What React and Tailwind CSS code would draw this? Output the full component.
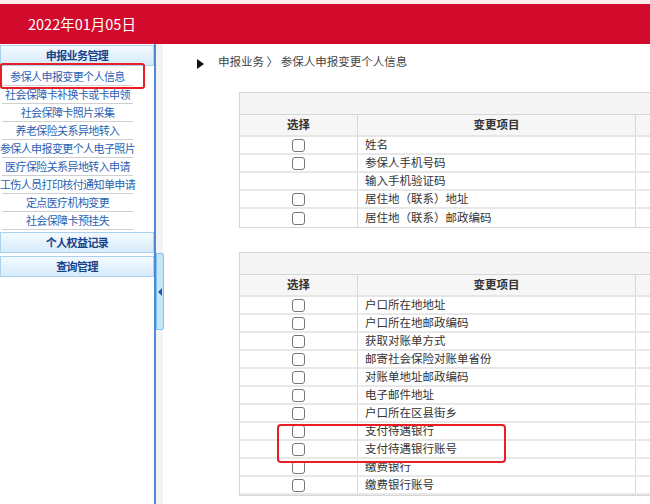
import React from 'react';

const MENU = [
  '参保人申报变更个人信息',
  '社会保障卡补换卡或卡申领',
  '社会保障卡照片采集',
  '养老保险关系异地转入',
  '参保人申报变更个人电子照片',
  '医疗保险关系异地转入申请',
  '工伤人员打印核付通知单申请',
  '定点医疗机构变更',
  '社会保障卡预挂失',
];

const TABLE_1 = [
  { label: '姓名', box: true },
  { label: '参保人手机号码', box: true },
  { label: '输入手机验证码', box: false },
  { label: '居住地（联系）地址', box: true },
  { label: '居住地（联系）邮政编码', box: true },
];

const TABLE_2 = [
  '户口所在地地址',
  '户口所在地邮政编码',
  '获取对账单方式',
  '邮寄社会保险对账单省份',
  '对账单地址邮政编码',
  '电子邮件地址',
  '户口所在区县街乡',
  '支付待遇银行',
  '支付待遇银行账号',
  '缴费银行',
  '缴费银行账号',
].map(label => ({ label, box: true }));

function GroupHeader({ children }) {
  return (
    <div className="h-[21px] flex items-center justify-center border border-[#a9d2f1] bg-gradient-to-b from-[#f4faff] to-[#d6ebfa] text-[11px] tracking-[-0.6px] font-bold text-[#15428b]">
      {children}
    </div>
  );
}

function Checkbox() {
  return <span className="block w-[13px] h-[13px] rounded-[3px] border border-[#767676] bg-white" />;
}

function ChangeTable({ rows, children }) {
  return (
    <div className="relative w-[470px] border border-[#d6d6d6] border-r-0 text-[11.5px] text-[#333]">
      <div className="h-[22px] bg-[#f5f5f5] border-b border-[#d6d6d6]" />
      <div className="flex h-[22px] bg-[#f6f6f6] border-b-2 border-[#e6e6e6] font-bold">
        <div className="w-[118px] flex items-center justify-center border-r border-[#d9d9d9]">选择</div>
        <div className="w-[278px] flex items-center justify-center border-r border-[#d9d9d9]">变更项目</div>
        <div className="flex-1" />
      </div>
      {rows.map(r => (
        <div key={r.label} className="flex h-[18px] border-b-2 border-[#e8e8e8] last:border-b-0">
          <div className="w-[118px] flex items-center justify-center border-r border-[#d9d9d9]">
            {r.box && <Checkbox />}
          </div>
          <div className="w-[278px] flex items-center pl-[7px] border-r border-[#d9d9d9] leading-none">{r.label}</div>
          <div className="flex-1" />
        </div>
      ))}
      {children}
    </div>
  );
}

export default function App() {
  return (
    <div className="w-[650px] h-[504px] overflow-hidden bg-white font-['Noto_Sans_CJK_SC',sans-serif] flex flex-col">
      <div className="h-[4px] bg-[#fbeef0]" />
      <div className="h-[40px] bg-[#d20a2c] flex items-center pl-[28px] text-[14.5px] text-white">
        2022年01月05日
      </div>

      <div className="flex flex-1 min-h-0">
        {/* left menu */}
        <div className="relative w-[156px] border-r-2 border-[#4d8ad6] pt-[1px]">
          <GroupHeader>申报业务管理</GroupHeader>
          <div className="w-[135px] pt-[2px]">
            {MENU.map(m => (
              <div key={m} className="mx-[2px] h-[18px] flex items-center justify-center border-b border-[#cfcfcf] text-[11px] tracking-[-0.6px] text-[#2b5fb3] whitespace-nowrap leading-none">
                {m}
              </div>
            ))}
          </div>
          <div className="mt-[2px] flex flex-col gap-[3px]">
            <GroupHeader>个人权益记录</GroupHeader>
            <GroupHeader>查询管理</GroupHeader>
          </div>
          <div className="absolute left-0 top-[19px] w-[145px] h-[26px] border-2 border-[#ea1c24] rounded-[3px]" />
        </div>

        {/* splitter */}
        <div className="relative w-[7px] bg-[#f3f3f3]">
          <div className="absolute left-0 top-[209px] w-[8px] h-[77px] bg-[#c6e7fb] border border-[#7fc3ef] rounded-r-[2px] flex items-center justify-center">
            <span className="block w-0 h-0 border-y-[4px] border-y-transparent border-r-[4px] border-r-[#2a56a8]" />
          </div>
        </div>

        {/* content */}
        <div className="flex-1 min-w-0 overflow-hidden">
          <div className="flex items-center h-[16px] mt-[10px] pl-[34px] text-[11.5px] text-[#444]">
            <span className="block w-0 h-0 border-y-[5px] border-y-transparent border-l-[7px] border-l-[#111] mt-[4px]" />
            <span className="ml-[14px] whitespace-pre">申报业务 〉 参保人申报变更个人信息</span>
          </div>
          <div className="pl-[76px] pt-[22px] flex flex-col gap-[24px]">
            <ChangeTable rows={TABLE_1} />
            <ChangeTable rows={TABLE_2}>
              <div className="absolute left-[37px] top-[171px] w-[229px] h-[39px] border-2 border-[#ea1c24] rounded-[4px]" />
            </ChangeTable>
          </div>
        </div>
      </div>
    </div>
  );
}
